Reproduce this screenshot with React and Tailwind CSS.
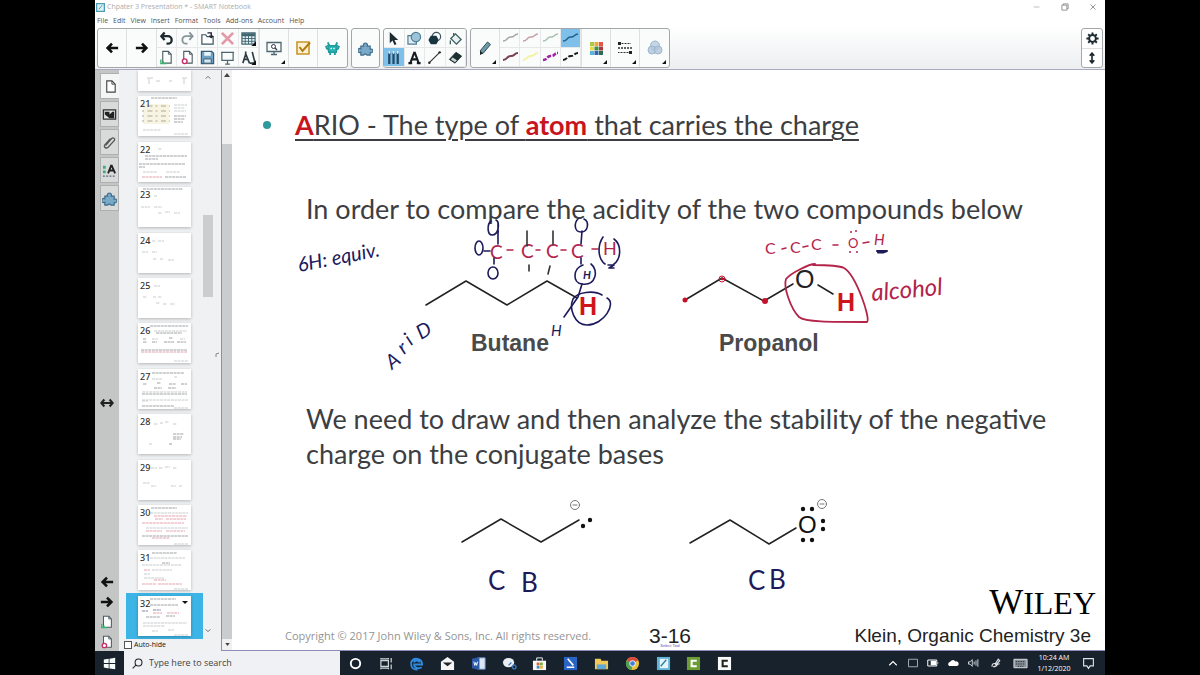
import clsx from 'clsx';

const INK = '#1d1a5c';
const PEN = '#b3234a';

const menus = ['File', 'Edit', 'View', 'Insert', 'Format', 'Tools', 'Add-ons', 'Account', 'Help'];

const icons = {
    left: <path d="M15 8H4M8 3 3 8l5 5" stroke="#111" strokeWidth="3" />,
    right: <path d="M1 8h11M8 3l5 5-5 5" stroke="#111" strokeWidth="3" />,
    undo: <path d="M6 1.500 2.500 5.500 6 9.500M3 5.500h6.500a4 4 0 0 1 0 8H8" stroke="#1d2a30" strokeWidth="2.500" />,
    redo: <path d="m10 1.500 3.500 4-3.500 4M13 5.500H6.500a4 4 0 0 0 0 8H8" stroke="#87959b" strokeWidth="2" />,
    open: <><path d="M2 14V4h4l1.500 2H14v8z" stroke="#3c5560" strokeWidth="1.300" fill="#fff" /><path d="M8 2h4v4m-2-1 2 2 2-2" stroke="#223" strokeWidth="1.500" /></>,
    cut: <path d="m2 2 12 12M14 2 2 14" stroke="#e39aa8" strokeWidth="3" />,
    table: <><rect x="1" y="2" width="14" height="12" fill="#eaf3f5" stroke="#3f6571" strokeWidth="1.300" /><path d="M1 4h14" stroke="#3f6571" strokeWidth="3" /><path d="M1 8h14M1 11h14M4.500 3v11M8 3v11M11.500 3v11" stroke="#3f6571" /><path d="M16 11v5h-5z" fill="#111" /></>,
    add: <><path d="M4 1.500h6l3 3V14H4z" fill="#fff" stroke="#4b5c62" strokeWidth="1.200" /><path d="M10 1.500v3h3" stroke="#4b5c62" /><path d="M2 10v4.500h6M4.500 12v3" stroke="#36b56e" strokeWidth="1.500" /></>,
    remove: <><path d="M4 1.500h6l3 3V14H4z" fill="#fff" stroke="#4b5c62" strokeWidth="1.200" /><path d="M10 1.500v3h3" stroke="#4b5c62" /><circle cx="5" cy="12" r="2.500" fill="#fff" stroke="#c92d62" strokeWidth="1.500" /></>,
    save: <><path d="M1.500 1.500h11l2 2v11h-13z" fill="#6fa3c4" stroke="#355d76" strokeWidth="1.300" /><path d="M4.500 2h7v4h-7z" fill="#e9f3f8" /><path d="M4 9.500h8V14H4z" fill="#d5e6ef" stroke="#355d76" /></>,
    screen: <path d="M1 2.500h14M2 3v8h12V3M8 11v4M5.500 15h5" stroke="#4e666f" strokeWidth="1.300" />,
    measure: <><path d="M5 1.500v3L2 14M5 4l4 10M12 2l3 12H9M4 10h3" stroke="#2e3d43" strokeWidth="1.800" /><path d="M16 11v5h-5z" fill="#111" /></>,
    monitor: <><path d="M1 2.500h14v9H1zM5 14.500h6M8 12v2" stroke="#4e666f" strokeWidth="1.300" /><circle cx="7.500" cy="6.500" r="2" stroke="#334" /><path d="m9 8 2 2" stroke="#334" strokeWidth="1.300" /></>,
    check: <><path d="M2 2h12v12H2z" fill="#fdf1cf" stroke="#c8952a" strokeWidth="1.600" /><path d="m4.500 7 3 4L15 2.500" stroke="#b27a10" strokeWidth="2" /></>,
    monster: <><path d="M3 5h10l-1 7H4z" fill="#2ab5b4" stroke="#1f9a9c" strokeWidth="1.500" /><path d="m1 5 1 3 2 1m11-4-1 3-2 1M4.500 5 3 1.500M11.500 5 13 1.500M5.500 12v3m5-3v3" stroke="#1f9a9c" strokeWidth="2" /><circle cx="6.500" cy="8" r=".8" fill="#fff" /><circle cx="9.500" cy="8" r=".8" fill="#fff" /></>,
    puzzle: <path d="M3 5.500h3a2.200 2.200 0 1 1 3.800 0H13v3.200a2 2 0 1 1 0 3.600V15H9.500a2 2 0 0 0-3.500 0H3v-3a2.200 2.200 0 1 1 0-3.800z" fill="#79a9c6" stroke="#3d6c8c" strokeWidth="1.200" />,
    cursor: <path d="M4 1v12l3-3 2 5 2.200-1-2.200-4.500h4z" fill="#1c2a30" />,
    shapes: <><path d="M1 5h9v9H1z" fill="#dfeaf0" stroke="#4f7f98" strokeWidth="1.300" /><circle cx="9.500" cy="6.500" r="5" fill="#9cc3d6" stroke="#4f7f98" strokeWidth="1.300" /></>,
    poly: <><circle cx="10" cy="6" r="4.500" stroke="#3c5560" fill="#fff" strokeWidth="1.300" /><path d="M4 5h6l2.500 4.500L10 14H4L1.500 9.500z" fill="#173540" /></>,
    fill: <><path d="m3 8 5-5 6 6-5 5z" fill="#e8f0f0" stroke="#3c5f64" strokeWidth="1.400" /><path d="M6 5V2m-3.500 8v4" stroke="#3c5f64" strokeWidth="1.400" /></>,
    pens: <><path d="M3.500 3v12M8 3v12M12.500 3v12" stroke="#214a66" strokeWidth="2.400" /><path d="M3.500 1v3M8 1v3M12.500 1v3" stroke="#dceefa" strokeWidth="1.500" /></>,
    text: <path d="M8 2 3.500 14M8 2l4.500 12M5 10h6M1.500 14h4M10.500 14h4" stroke="#151d20" strokeWidth="2.200" />,
    line: <><path d="M3 13 13 3" stroke="#333" strokeWidth="1.200" /><circle cx="2.500" cy="13.500" r="1.300" fill="#222" /><circle cx="13.500" cy="2.500" r="1.300" fill="#222" /></>,
    eraser: <><path d="m1.500 10 7-7.500 6 4-7 7.500z" fill="#1d2f30" stroke="#1d2f30" /><path d="m3 10 2-2 4.500 3-2 2z" fill="#c9d6d6" /></>,
    pencil: <><path d="m3 11 7.500-9 3 2.500L6 13.500z" fill="#6c9aa8" stroke="#33505a" /><path d="M3 11v4l3-1.500z" fill="#222" /></>,
    palette: <><path d="M2 2h4v4H2z" fill="#a8c944" /><path d="M6.500 2h4v4h-4z" fill="#efa63a" /><path d="M11 2h4v4h-4z" fill="#e2564d" /><path d="M2 6.500h4v4H2z" fill="#e6d94a" /><path d="M6.500 6.500h4v4h-4z" fill="#3f8f4c" /><path d="M11 6.500h4v4h-4z" fill="#a83a3a" /><path d="M2 11h4v4H2z" fill="#56b6d8" /><path d="M6.500 11h4v4h-4z" fill="#2f67ae" /><path d="M11 11h4v4h-4z" fill="#2f6b52" /></>,
    lines: <><path d="M2 3.500h12" stroke="#333" strokeDasharray="1 .5" /><path d="M1 8h14" stroke="#333" strokeWidth="1.500" strokeDasharray="2 1" /><path d="M1 12.500h12" stroke="#333" strokeDasharray="1 .5" /><path d="M1 2h3v3H1zM12 11h3v3h-3z" fill="#222" /></>,
    circles: <><circle cx="8" cy="5.500" r="4.500" fill="#c5d5e4" stroke="#9fb7cf" /><circle cx="5" cy="10" r="4" fill="#b0c6dc" fillOpacity=".8" stroke="#9fb7cf" /><circle cx="11" cy="10" r="4" fill="#b0c6dc" fillOpacity=".8" stroke="#9fb7cf" /></>,
    gear: <><circle cx="8" cy="8" r="4.200" stroke="#1c2a30" strokeWidth="2.400" /><path d="M8 .5v3M8 12.500v3M.5 8h3M12.500 8h3M2.700 2.700l2 2M11.300 11.300l2 2M13.300 2.700l-2 2M4.700 11.300l-2 2" stroke="#1c2a30" strokeWidth="2.400" /></>,
    updown: <path d="M8 2v12M5 5l3-3.500L11 5M5 11l3 3.500L11 11" stroke="#1c2a30" strokeWidth="2.200" />,
    leftright: <path d="M2 8h12M5 4 1.500 8 5 12M11 4l3.500 4L11 12" stroke="#222" strokeWidth="2.400" />,
    page: <><path d="M4 2h5.500L13 5.500V14H4z" fill="#fff" stroke="#444" strokeWidth="1.200" /><path d="M9.500 2v3.500H13" stroke="#444" /></>,
    gallery: <><path d="M1.500 3h13v10h-13z" fill="#dfe3e4" stroke="#333" strokeWidth="1.400" /><path d="M3 5h5v3l3-3h2v7H8L3 8z" fill="#222" /></>,
    clip: <path d="m4 11 6-7c2-2 4.500 0 3 2l-6.500 7c-2 2-5 0-3.500-2.500L9 4" stroke="#555" strokeWidth="1.400" />,
    props: <><path d="M1 3h3v3H1zM1 8h3v3H1z" fill="#45a888" /><path d="M10 2 6.500 11M10 2l4 9M8 8h5" stroke="#222" strokeWidth="2" /><path d="M1 14h14" stroke="#567" strokeWidth="1.500" strokeDasharray="2 1.500" /></>,
};

function Icon({ name, className = 'h-4 w-4' }) {
    return (
        <svg viewBox="0 0 16 16" fill="none" className={clsx('shrink-0', className)} aria-hidden="true">
            {icons[name]}
        </svg>
    );
}

function Squiggle({ color, width = 1.5, dash }) {
    return (
        <svg viewBox="0 0 18 14" fill="none" className="h-[14px] w-[18px]" aria-hidden="true">
            <path d="M2 10c3 0 3-1 5-3s4 0 6-2 2-2 4-2" stroke={color} strokeWidth={width} strokeDasharray={dash} />
        </svg>
    );
}

function ToolButton({ label, active, menu, children, className }) {
    return (
        <button
            type="button"
            aria-label={label}
            className={clsx('relative flex items-center justify-center', active ? 'bg-[#7fc0ea]' : 'hover:bg-sky-100', className)}
        >
            {children}
            {menu && <span className="absolute right-[3px] bottom-[3px] border-b-4 border-l-4 border-b-[#111] border-l-transparent" />}
        </button>
    );
}

function Group({ children }) {
    return (
        <div className="flex h-10 divide-x divide-[#dddfe1] overflow-hidden rounded-[3px] border border-[#a4a7aa] bg-[#fafbfb]">
            {children}
        </div>
    );
}

const editTools = ['undo', 'redo', 'open', 'cut', 'table', 'add', 'remove', 'save', 'screen', 'measure'];
const drawTools = ['cursor', 'shapes', 'poly', 'fill', 'pens', 'text', 'line', 'eraser'];
const strokes = [
    { color: '#a3a8a6' },
    { color: '#c4a3a8' },
    { color: '#a9c2b4' },
    { color: '#20628f', active: true },
    { color: '#7a3f52', width: 2 },
    { color: '#f3f3a8', width: 2 },
    { color: '#a224a6', width: 2.5, dash: '4 1.500' },
    { color: '#1b1b1b', width: 2, dash: '5 1.500' },
];

function Toolbar() {
    return (
        <div className="flex h-[43px] items-start gap-[3px] border-b border-[#a9a9c0] bg-linear-to-b from-white to-[#eceef0] px-[2px] pt-[1px]">
            <Group>
                <ToolButton label="Previous page" className="w-[29px]"><Icon name="left" className="h-[14px] w-[14px]" /></ToolButton>
                <ToolButton label="Next page" className="w-[30px]"><Icon name="right" className="h-[14px] w-[14px]" /></ToolButton>
                <div className="grid w-[103px] grid-cols-5 grid-rows-2">
                    {editTools.map((t) => (
                        <ToolButton key={t} label={t} className="border-r border-b border-[#e6e8e9]"><Icon name={t} className="h-[15px] w-[15px]" /></ToolButton>
                    ))}
                </div>
                <ToolButton label="Screen capture" menu className="w-[29px]"><Icon name="monitor" /></ToolButton>
                <ToolButton label="Response" className="w-[29px]"><Icon name="check" /></ToolButton>
                <ToolButton label="Activity" className="w-[29px]"><Icon name="monster" className="h-[15px] w-[15px]" /></ToolButton>
            </Group>
            <Group>
                <ToolButton label="Add-ons" className="w-[27px]"><Icon name="puzzle" className="h-[15px] w-[15px]" /></ToolButton>
            </Group>
            <Group>
                <div className="grid w-[82px] grid-cols-4 grid-rows-2">
                    {drawTools.map((t) => (
                        <ToolButton key={t} label={t} active={t === 'pens'} className="border-r border-b border-[#e6e8e9]"><Icon name={t} className="h-[15px] w-[15px]" /></ToolButton>
                    ))}
                </div>
            </Group>
            <Group>
                <ToolButton label="Pen type" menu className="w-[29px]"><Icon name="pencil" /></ToolButton>
                <div className="grid w-[82px] grid-cols-4 grid-rows-2">
                    {strokes.map((s, i) => (
                        <ToolButton key={i} label={`Pen ${i + 1}`} active={s.active} className="border-r border-b border-[#e6e8e9]">
                            <Squiggle color={s.color} width={s.width} dash={s.dash} />
                        </ToolButton>
                    ))}
                </div>
                <ToolButton label="Colour" menu className="w-[29px]"><Icon name="palette" /></ToolButton>
                <ToolButton label="Line style" menu className="w-[29px]"><Icon name="lines" /></ToolButton>
                <ToolButton label="Transparency" menu className="w-[29px]"><Icon name="circles" /></ToolButton>
            </Group>
            <div className="ml-auto flex h-10 w-[22px] flex-col overflow-hidden rounded-[3px] border border-[#a4a7aa] bg-white">
                <ToolButton label="Settings" className="flex-1 border-b border-[#dddfe1]"><Icon name="gear" className="h-[13px] w-[13px]" /></ToolButton>
                <ToolButton label="Move toolbar" className="flex-1"><Icon name="updown" className="h-3 w-3" /></ToolButton>
            </div>
        </div>
    );
}

// each mark: x, y, width, colour
const G = '#c9cbcd';
const D = '#9fa2a5';
const R = '#e3a3ad';
const pages = [
    { n: 21, marks: [[13, 2, 26, D], [36, 9, 13, G], [36, 12, 11, G], [36, 15, 12, G], [36, 20, 12, D], [36, 23, 11, D], [36, 26, 9, D], [5, 34, 18, G], [36, 38, 14, G]], block: true },
    { n: 22, marks: [[20, 7, 4, G], [7, 14, 42, D], [7, 17, 13, D], [1, 22, 46, D], [1, 25, 6, D], [5, 30, 14, G], [28, 30, 14, G], [4, 35, 20, R], [27, 35, 21, D]] },
    { n: 23, marks: [[5, 2, 40, D], [16, 9, 3, G], [3, 20, 9, G], [16, 20, 8, G], [20, 26, 4, G], [27, 25, 5, G], [36, 26, 6, G]] },
    { n: 24, marks: [[14, 8, 4, G], [20, 8, 6, G], [4, 19, 6, G], [14, 19, 5, G], [15, 26, 4, G], [22, 26, 3, G], [30, 27, 6, G]] },
    { n: 25, marks: [[16, 8, 6, G], [5, 19, 4, G], [15, 19, 3, G], [20, 19, 4, G], [18, 25, 4, G], [25, 26, 4, G], [32, 26, 5, G]] },
    { n: 26, marks: [[12, 3, 38, D], [16, 8, 33, G], [18, 10, 26, D], [5, 16, 3, D], [14, 16, 6, G], [31, 15, 4, D], [42, 16, 5, G], [5, 19, 4, D], [14, 19, 5, D], [26, 19, 10, D], [39, 19, 9, D], [3, 27, 46, D], [3, 29, 46, R], [36, 38, 14, G]] },
    { n: 27, marks: [[14, 4, 32, D], [14, 10, 10, G], [36, 8, 3, G], [5, 15, 4, D], [19, 14, 4, D], [31, 15, 7, D], [43, 15, 6, D], [16, 19, 8, D], [30, 19, 8, D], [4, 23, 45, G], [4, 25, 45, D], [4, 31, 46, G], [4, 32, 6, G], [4, 37, 32, D], [36, 39, 14, G]] },
    { n: 28, marks: [[16, 10, 4, G], [22, 9, 3, G], [27, 8, 4, G], [35, 10, 4, G], [35, 20, 11, D], [35, 23, 9, D], [35, 25, 8, D], [11, 30, 3, G], [31, 30, 3, D]] },
    { n: 29, marks: [[13, 8, 6, G], [21, 8, 4, G], [27, 7, 5, G], [35, 8, 4, G], [5, 23, 7, G], [13, 26, 5, G], [33, 26, 5, G], [41, 26, 3, G]] },
    { n: 30, marks: [[13, 3, 26, D], [12, 8, 38, G], [16, 11, 33, R], [17, 14, 8, R], [28, 14, 20, R], [4, 18, 42, R], [8, 23, 42, G], [8, 26, 16, R], [28, 26, 19, R], [4, 31, 46, D], [14, 33, 18, R], [36, 39, 14, G]] },
    { n: 31, marks: [[14, 3, 25, D], [12, 8, 35, G], [24, 13, 8, D], [4, 15, 40, G], [14, 20, 20, G], [6, 20, 6, R], [6, 24, 6, G], [6, 28, 20, G], [16, 30, 12, R], [4, 34, 14, R], [20, 34, 24, R], [36, 39, 14, G]] },
    { n: 32, marks: [[12, 3, 26, D], [12, 9, 28, D], [4, 15, 6, '#8583a8'], [15, 14, 8, '#8583a8'], [15, 17, 9, R], [29, 17, 12, R], [8, 21, 14, D], [28, 20, 9, D], [5, 27, 44, G], [5, 30, 22, G], [14, 35, 6, G], [30, 34, 6, G], [36, 39, 14, G]], active: true },
];

function Thumb({ page }) {
    return (
        <li className={clsx('flex justify-center', page.active && '-my-[3px] bg-[#3cb4e5] py-[3px]')}>
            <button type="button" aria-label={`Page ${page.n}`} className="relative h-10 w-[53px] bg-white shadow-[0_1px_3px_rgba(0,0,0,0.25)]">
                <svg viewBox="0 0 53 40" className="absolute inset-0 h-full w-full" aria-hidden="true">
                    {page.block && <path d="M5 8h26v20H5z" fill="#f8f4e4" />}
                    {page.block && [10, 15, 20, 25].map((y) => (
                        <path key={y} d={`M4 ${y}h28`} stroke="#b0a98c" strokeDasharray="2 3.500 5 3" />
                    ))}
                    {page.marks.map(([x, y, w, c], i) => (
                        <path key={i} d={`M${x} ${y}h${w}`} stroke={c} strokeWidth="1" strokeDasharray="3 .6" />
                    ))}
                    {page.active && <path d="M44 5h6l-3 3z" fill="#111" />}
                </svg>
                <span className="absolute top-[2px] left-[2px] font-['Noto_Sans'] text-[9px] leading-[11px] font-medium text-[#333]">{page.n}</span>
            </button>
        </li>
    );
}

const tabs = ['page', 'gallery', 'clip', 'props', 'puzzle'];

function Sidebar() {
    return (
        <aside className="flex w-[126px] shrink-0 bg-[#f0f1f2]">
            <div className="flex w-6 flex-col bg-[#c4c6c6] pt-[3px]">
                <div className="flex flex-col gap-[2px] pl-[5px]">
                    {tabs.map((t, i) => (
                        <button
                            key={t}
                            type="button"
                            aria-label={`${t} tab`}
                            className={clsx('flex h-[26px] items-center justify-center border border-[#aeb0b0]', i === 0 ? 'border-r-0 bg-[#f4f5f5]' : 'bg-[#d9dbdb]')}
                        >
                            <Icon name={t} className="h-[15px] w-[15px]" />
                        </button>
                    ))}
                </div>
                <div className="flex flex-1 items-end justify-center">
                    <Icon name="leftright" className="h-[14px] w-[14px]" />
                </div>
                <div className="flex h-[241px] flex-col items-center justify-end gap-[6px] pb-[2px]">
                    <Icon name="left" className="h-[14px] w-[14px]" />
                    <Icon name="right" className="h-[14px] w-[14px]" />
                    <Icon name="add" className="h-[14px] w-[14px]" />
                    <Icon name="remove" className="h-[14px] w-[14px]" />
                </div>
            </div>
            <div className="flex min-w-0 flex-1 flex-col">
                <div className="flex min-h-0 flex-1 pl-[7px]">
                    <ul className="flex w-[77px] flex-col justify-between pb-[2px]">
                        <li className="flex justify-center">
                            <div className="h-[21px] w-[53px] bg-white shadow-[0_1px_3px_rgba(0,0,0,0.25)]">
                                <svg viewBox="0 0 53 21" className="h-full w-full" aria-hidden="true">
                                    <path d="M9 8h6M18 11h4M31 11h3M44 8h5M11 9v5M46 9v5" stroke={G} />
                                </svg>
                            </div>
                        </li>
                        {pages.map((p) => <Thumb key={p.n} page={p} />)}
                    </ul>
                    <div className="flex w-[10px] flex-col items-center justify-between py-1">
                        <svg viewBox="0 0 8 6" className="h-[6px] w-2" fill="none" aria-hidden="true"><path d="m1.500 4.500 2.500-2 2.500 2" stroke="#777" /></svg>
                        <div className="mb-[196px] h-[82px] w-full bg-[#cccdce]" />
                        <svg viewBox="0 0 8 6" className="h-[6px] w-2" fill="none" aria-hidden="true"><path d="m1.500 1.500 2.500 2 2.500-2" stroke="#777" /></svg>
                    </div>
                    <div className="flex flex-1 items-center justify-center">
                        <svg viewBox="0 0 4 5" className="h-[5px] w-1" fill="none" aria-hidden="true"><path d="M1 5V2l3-1" stroke="#888" /></svg>
                    </div>
                </div>
                <label className="flex h-[13px] items-center gap-[2px] pl-[5px] text-[7px] leading-[10px] text-[#111]">
                    <input type="checkbox" className="h-2 w-2 appearance-none border border-[#555] bg-white" />
                    Auto-hide
                </label>
            </div>
        </aside>
    );
}

function AcidsFigure() {
    return (
        <svg viewBox="232 226 873 175" className="block w-full overflow-visible" fill="none" strokeLinecap="round" strokeLinejoin="round" role="img" aria-label="Butane and propanol">
            <g stroke="#222" strokeWidth="1.5">
                <path d="m426 305 40-24 41 24 40-24 30 17" />
                <path d="m685 300 37-22 42 23 29-17M818 285l15 9" />
            </g>
            <g className="font-['Liberation_Sans']" fill="#4a4a4a" fontWeight="700" fontSize="23">
                <text x="471" y="351">Butane</text>
                <text x="719" y="351">Propanol</text>
            </g>
            <g className="font-['Liberation_Sans']" fontSize="25">
                <text x="579" y="315" fill="#d0141c" fontWeight="700">H</text>
                <text x="837" y="311" fill="#d0141c" fontWeight="700">H</text>
                <text x="795" y="288" fill="#222">O</text>
            </g>

            {/* handwritten notes */}
            <g className="font-['Lato']" fontStyle="italic" fill={INK} fontSize="20">
                <text x="299" y="272" transform="rotate(-11 299 272)">6H: equiv.</text>
                <text x="392" y="370" transform="rotate(-38 392 370)">A</text>
                <text x="404" y="355" transform="rotate(-40 404 355)">r</text>
                <text x="411" y="346" transform="rotate(-40 411 346)">i</text>
                <text x="421" y="340" transform="rotate(-30 421 340)">D</text>
                <text x="551" y="336" fontSize="15">H</text>
                <text x="583" y="279" fontSize="11" fontWeight="700">H</text>
            </g>
            <g className="font-['Lato']" fill={PEN} fontSize="19">
                <text x="490" y="259">C</text>
                <text x="521" y="258">C</text>
                <text x="546" y="258">C</text>
                <text x="571" y="258">C</text>
                <text x="603" y="255" fontSize="18">H</text>
                <text x="765" y="254" fontSize="16">C</text>
                <text x="790" y="253" fontSize="16">C</text>
                <text x="811" y="250" fontSize="16">C</text>
                <text x="848" y="248" fontSize="13">O</text>
                <text x="874" y="245" fontSize="15" fontStyle="italic">H</text>
                <text x="872" y="301" fontSize="24" fontStyle="italic" transform="rotate(-5 872 301)">alcohol</text>
            </g>
            <g stroke={PEN} strokeWidth="1.500">
                <path d="M507 250h6M536 250h4M561 250h5M592 249h6M782 249l4-1M803 247l5-1M833 245h5M863 243l6-1" />
                <path d="M815 264c-6 0-24 9-29 15-3 8 5 30 13 38 6 5 30 5 68 5 4-3-11-47-23-54-6-3-22-3-31-3" strokeWidth="1.800" />
            </g>
            <g fill={PEN}>
                <circle cx="851" cy="232" r="1" /><circle cx="856" cy="231" r="1" />
                <circle cx="850" cy="252" r="1" /><circle cx="857" cy="252" r="1" />
            </g>
            <g fill="#c4122b">
                <circle cx="685" cy="300" r="2.500" /><circle cx="765" cy="301" r="3" />
                <circle cx="722" cy="279" r="3" stroke="#c4122b" fill="none" />
                <circle cx="722" cy="279" r="1.300" />
            </g>
            <g stroke={INK} strokeWidth="1.600">
                <ellipse cx="479" cy="248" rx="4" ry="7" />
                <path d="M484 251h6M498 244v-13M494 258v6M581 244l1-13M581 258v6" />
                <path d="M491 221c-4 3-4 14 1 14 7 0 8-13 4-15M498 222v10" />
                <ellipse cx="493" cy="273" rx="5" ry="6" />
                <path d="M578 219c-4 4-4 13 3 13 8 0 8-11 3-13" />
                <path d="M527 231v15M553 231v13M529 265v6M550 266l-2 8" stroke="#333" />
                <path d="M583 265c-10 3-11 18-1 19 14 2 17-14 9-20" />
                <path d="M603 237c-6 9-5 22 2 27M614 239c8 6 7 20 0 25M608 265h6l-5 3h5" />
                <path d="m582 284-4 13-14 20" />
                <path d="M602 295c-8-5-25-3-29 4-4 9 1 26 14 26 17 0 30-22 20-27" />
                <path d="M877 251h10l-4 1.500h-5" strokeWidth="2" />
            </g>
        </svg>
    );
}

function BasesFigure() {
    return (
        <svg viewBox="232 471 873 117" className="block w-full overflow-visible" fill="none" strokeLinecap="round" strokeLinejoin="round" role="img" aria-label="Conjugate bases">
            <g stroke="#222" strokeWidth="1.500">
                <path d="m462 542 39-23 40 23 38-22" />
                <path d="m690 543 40-23 39 24 27-16" />
            </g>
            <g stroke="#777" strokeWidth="1">
                <circle cx="575" cy="505" r="4.500" /><path d="M573 505h4" />
                <circle cx="822" cy="504" r="4.500" /><path d="M820 504h4" />
            </g>
            <g fill="#111">
                <circle cx="583" cy="526" r="2.200" /><circle cx="590" cy="520" r="2.200" />
                <circle cx="803" cy="509" r="2.200" /><circle cx="812" cy="509" r="2.200" />
                <circle cx="823" cy="521" r="2.200" /><circle cx="823" cy="529" r="2.200" />
                <circle cx="803" cy="540" r="2.200" /><circle cx="812" cy="540" r="2.200" />
            </g>
            <text x="798" y="533" className="font-['Liberation_Sans']" fontSize="24" fill="#111">O</text>
            <g className="font-['Lato']" fill={INK} fontSize="26">
                <text x="488" y="590">C</text>
                <text x="521" y="592">B</text>
                <text x="748" y="590">C</text>
                <text x="769" y="589">B</text>
            </g>
        </svg>
    );
}

function Slide() {
    return (
        <main className="flex min-w-0 flex-1 flex-col border-b border-[#8f8cb5] bg-white pt-[37px] font-['Lato'] text-[27px] leading-[35px] text-[#3c3e42]">
            <ul className="pl-[31px]">
                <li className="flex items-center gap-[24px]">
                    <span className="h-2 w-2 rounded-full bg-[#2f9a9c]" />
                    <h1 className="underline decoration-2 underline-offset-4">
                        <b className="text-[#c8141e]">A</b>RIO - The type of <b className="text-[#c8141e]">atom</b> that carries the charge
                    </h1>
                </li>
            </ul>
            <p className="mt-[49px] pl-[74px]">In order to compare the acidity of the two compounds below</p>
            <AcidsFigure />
            <p className="max-w-[840px] pl-[74px]">We need to draw and then analyze the stability of the negative charge on the conjugate bases</p>
            <BasesFigure />
            <div className="mt-auto flex h-[30px] items-center justify-end pr-[9px] font-['Liberation_Serif'] text-black">
                <span className="text-[36px]">W<span className="text-[32px]">ILEY</span></span>
            </div>
            <footer className="grid h-8 grid-cols-[364px_1fr_auto] items-center pr-[14px] pl-[53px] font-['Liberation_Sans'] text-[#222]">
                <small className="font-['Open_Sans'] text-[11px] text-[#949494]">Copyright © 2017 John Wiley &amp; Sons, Inc. All rights reserved.</small>
                <span className="relative justify-self-start text-[21px]">
                    3-16
                    <span className="absolute inset-x-0 bottom-[5px] text-center text-[4px] leading-[5px] text-[#5b4fb0]">Select Tool</span>
                </span>
                <span className="text-[19px]">Klein, Organic Chemistry 3e</span>
            </footer>
        </main>
    );
}

const apps = [
    ['Cortana', <circle cx="8" cy="8" r="5" stroke="#fff" strokeWidth="2" />],
    ['Task view', <path d="M2 5h8v6H2zM2 2v1h8V2M2 14v-1h8v1M13 2v5M13 9v5" stroke="#cfd6da" strokeWidth="1.300" />],
    ['Edge', <path d="M2 8c1-4 4-5.500 7-5s5 3 5 6H5.500c0 4 4.500 5 8 3M5.500 7c0-3 5.500-3 5.500 0M2.500 8C1.500 12 5 15 9 14.500" stroke="#2f8be0" strokeWidth="2" />],
    ['Mail', <><path d="M1 6 8 1l7 5v9H1z" fill="#f5f5f5" /><path d="m3 7 10 0-5 4z" fill="#222" /></>],
    ['Word', <><path d="M7 2h8v12H7z" fill="#dce6f4" stroke="#7fa0d0" /><path d="M1 3l8-2v14l-8-2z" fill="#2d5aa5" /><path d="m3 6 1 4 1-3 1 3 1-4" stroke="#fff" /></>],
    ['Snip', <><ellipse cx="7" cy="7" rx="6" ry="5" fill="#e8eef2" /><path d="m7 10 3-3m1 5a2 2 0 1 0 3-2 2 2 0 0 0-3 2" stroke="#3f79b5" strokeWidth="1.500" /></>],
    ['Store', <><path d="M1 5h14v10H1z" fill="#f7f7f7" /><path d="M5 5V2h6v3" stroke="#f7f7f7" /><path d="M5 7h3v3H5z" fill="#d9603a" /><path d="M8.500 7h3v3h-3z" fill="#7cae3a" /><path d="M5 10.500h3v3H5z" fill="#3d8bd0" /><path d="M8.500 10.500h3v3h-3z" fill="#e8b73a" /></>],
    ['Ink', <><path d="M1 1h14v14H1z" fill="#2a64c4" /><path d="m5 3 6 7M4 12h8" stroke="#fff" strokeWidth="1.700" /></>],
    ['Files', <><path d="M1 3h6l1 2h7v9H1z" fill="#f0c95a" /><path d="M3 9h10v5H3z" fill="#5ea7d8" /></>],
    ['Chrome', <><circle cx="8" cy="8" r="7" fill="#e9c23c" /><path d="M8 8 2 4.400A7 7 0 0 0 7 15z" fill="#4c9f57" /><path d="M2 4.400A7 7 0 0 1 14 4.400L8 8z" fill="#d9493c" /><circle cx="8" cy="8" r="3" fill="#3f7fd8" stroke="#fff" /></>],
    ['Notebook', <><path d="M1 1h14v14H1z" fill="#5db4d6" /><path d="M4 3h9v10H4z" fill="#e6f5fa" /><path d="m5 11 6-7" stroke="#2f7fa3" strokeWidth="1.500" /></>],
    ['Camtasia', <><path d="M1 1h14v14H1z" fill="#6c9d35" /><path d="M11.500 5H6v6h5.500" stroke="#fff" strokeWidth="2.200" /></>],
    ['Recorder', <><path d="M1 1h14v14H1z" fill="#fafafa" /><path d="M11.500 5H6v6h5.500" stroke="#222" strokeWidth="2.200" /></>],
];

const tray = [
    ['Show hidden icons', <path d="m3 11 5-5 5 5" stroke="#fff" strokeWidth="1.500" />],
    ['Display', <path d="M2 3h12v10H2z" stroke="#aeb6bc" strokeWidth="1.200" />],
    ['Battery', <><path d="M1 4h12v8H1z" stroke="#fff" strokeWidth="1.300" /><path d="M5 5h7v6H5zM14 7h1v2h-1z" fill="#fff" /></>],
    ['OneDrive', <path d="M3 12a3 3 0 0 1 1-5.500A4 4 0 0 1 11 6a3 3 0 0 1 2.500 6z" fill="#fff" />],
    ['Volume', <path d="M2 6.500h2l3-3v9l-3-3H2zM9.500 6v4M12 4.500v7M14.500 3v10" stroke="#dfe3e6" strokeWidth="1.200" />],
    ['Pen', <path d="M3 13a3 3 0 0 1 4-4l4-6 2 2-5 5 5-1M4 13c3 0 5-1 6-3" stroke="#dfe3e6" strokeWidth="1.500" />],
    ['Keyboard', <><path d="M1 3.500h14v9H1z" fill="#8a9298" stroke="#dfe3e6" /><path d="M3 6h10M3 8.500h10M5 11h6" stroke="#222c33" strokeDasharray="1.500 1" /></>],
];

function AppIcon({ children, className }) {
    return <svg viewBox="0 0 16 16" fill="none" className={className} aria-hidden="true">{children}</svg>;
}

function Taskbar() {
    return (
        <footer className="flex h-6 shrink-0 bg-[#17222c] text-white">
            <button type="button" aria-label="Start" className="flex w-[29px] items-center justify-center">
                <AppIcon className="h-[13px] w-[13px]">
                    <path d="M1 3l6-1v5.500H1zM8 2l7-1v6.500H8zM1 8.500h6V14l-6-1zM8 8.500h7V15l-7-1z" fill="#f3fbfb" />
                </AppIcon>
            </button>
            <label className="flex w-[216px] items-center gap-[6px] bg-[#eff1f4] pl-2">
                <AppIcon className="h-[11px] w-[11px]">
                    <circle cx="9.500" cy="6.500" r="5" stroke="#222" strokeWidth="1.500" /><path d="m6 10-5 5" stroke="#222" strokeWidth="1.500" />
                </AppIcon>
                <input aria-label="Search" placeholder="Type here to search" className="min-w-0 flex-1 text-[9px] leading-3 placeholder:text-[#444]" />
            </label>
            <nav className="flex w-[400px]">
                {apps.map(([name, art]) => (
                    <button key={name} type="button" aria-label={name} className="flex flex-1 items-center justify-center">
                        <AppIcon className="h-[15px] w-[15px]">{art}</AppIcon>
                    </button>
                ))}
            </nav>
            <div className="ml-auto flex items-center pr-1">
                {tray.map(([name, art], i) => (
                    <button key={name} type="button" aria-label={name} className={clsx('flex justify-center', i < 5 ? 'w-5' : 'w-[25px]')}>
                        <AppIcon className={i < 6 ? 'h-3 w-3' : 'h-[15px] w-[15px]'}>{art}</AppIcon>
                    </button>
                ))}
                <time className="w-[42px] text-center text-[7px] leading-[11px]">10:24 AM<br />1/12/2020</time>
                <button type="button" aria-label="Notifications" className="flex w-[26px] justify-center">
                    <AppIcon className="h-[13px] w-[13px]"><path d="M2 2h12v9h-4l-2 3-2-3H2z" stroke="#dfe3e6" strokeWidth="1.400" /></AppIcon>
                </button>
            </div>
        </footer>
    );
}

export default function App() {
    return (
        <div className="h-screen overflow-hidden bg-black px-[95px] font-['Open_Sans',sans-serif]">
            <div className="flex h-full flex-col bg-white">
                <header className="shrink-0">
                    <div className="flex h-[14px] items-center gap-[2px] pl-[1px] text-[7px] leading-[10px] text-[#a9adb0]">
                        <AppIcon className="h-[9px] w-[9px]"><path d="M1 1h14v14H1z" fill="#dff1f5" stroke="#4a9db3" strokeWidth="2.500" /><path d="m5 11 6-7" stroke="#2f7fa3" strokeWidth="1.500" /></AppIcon>
                        <span>Chpater 3 Presentation * - SMART Notebook</span>
                        <div className="ml-auto flex gap-[18px] pr-[7px]">
                            <button type="button" aria-label="Minimize"><AppIcon className="h-[10px] w-[10px]"><path d="M3 8h9" stroke="#999" /></AppIcon></button>
                            <button type="button" aria-label="Restore"><AppIcon className="h-[10px] w-[10px]"><path d="M3 5h8v8H3zM5 5V3h8v8h-2" stroke="#888" strokeWidth="1.400" /></AppIcon></button>
                            <button type="button" aria-label="Close"><AppIcon className="h-[10px] w-[10px]"><path d="m4 4 8 8M12 4l-8 8" stroke="#888" strokeWidth="1.400" /></AppIcon></button>
                        </div>
                    </div>
                    <nav className="flex h-[13px] items-center gap-[5px] pl-[2px] text-[7px] leading-[10px] text-[#555]">
                        {menus.map((m) => <button key={m} type="button">{m}</button>)}
                    </nav>
                    <Toolbar />
                </header>
                <div className="flex min-h-0 flex-1">
                    <Sidebar />
                    <div className="flex w-[11px] shrink-0 flex-col items-center border-b border-l border-[#8f8cb5] bg-[#f1f1f2]">
                        <div className="flex h-[74px] pt-[3px]">
                            <svg viewBox="0 0 6 4" className="h-1 w-[6px]" aria-hidden="true"><path d="m0 4 3-4 3 4z" fill="#444" /></svg>
                        </div>
                        <div className="w-full flex-1 bg-[#cbccce]" />
                        <div className="flex h-[11px] items-center">
                            <svg viewBox="0 0 6 4" className="h-[3px] w-[5px]" aria-hidden="true"><path d="m0 0 3 4 3-4z" fill="#444" /></svg>
                        </div>
                    </div>
                    <Slide />
                </div>
                <Taskbar />
            </div>
        </div>
    );
}
